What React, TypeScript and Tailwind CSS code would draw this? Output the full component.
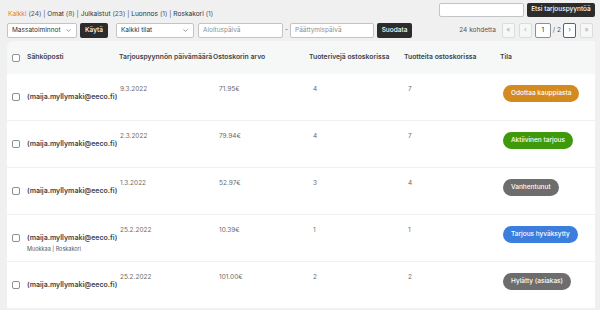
import { ChevronDown } from 'lucide-react';

type Row = {
  date: string;
  total: string;
  lines: string;
  qty: string;
  status: string;
  pill: string;
  actions?: boolean;
};

const rows: Row[] = [
  { date: '9.3.2022', total: '71.95€', lines: '4', qty: '7', status: 'Odottaa kauppiasta', pill: 'bg-[#d38a1f]' },
  { date: '2.3.2022', total: '79.94€', lines: '4', qty: '7', status: 'Aktiivinen tarjous', pill: 'bg-[#3f9a0b]' },
  { date: '1.3.2022', total: '52.97€', lines: '3', qty: '4', status: 'Vanhentunut', pill: 'bg-[#6d6d6d]' },
  { date: '25.2.2022', total: '10.39€', lines: '1', qty: '1', status: 'Tarjous hyväksytty', pill: 'bg-[#3b7ede]', actions: true },
  { date: '25.2.2022', total: '101.00€', lines: '2', qty: '2', status: 'Hylätty (asiakas)', pill: 'bg-[#6d6d6d]' },
];

const cols = 'grid grid-cols-[112px_94px_96px_95px_96px_1fr]';

function Checkbox() {
  return <span className="block w-[8px] h-[8px] rounded-[2px] border border-[#8c8f94] bg-white shrink-0" />;
}

function Select({ label, w }: { label: string; w: string }) {
  return (
    <div className={`${w} h-[15px] flex items-center justify-between pl-[4px] pr-[4px] bg-white border border-[#c3c4c7] rounded-[2px] text-[6.5px] text-[#2c3338]`}>
      <span>{label}</span>
      <ChevronDown className="w-[7px] h-[7px] text-[#50575e]" strokeWidth={2} />
    </div>
  );
}

function PageBtn({ ch, active }: { ch: string; active?: boolean }) {
  return (
    <span
      className={
        'w-[13px] h-[15px] flex items-center justify-center rounded-[2px] border text-[7px] ' +
        (active ? 'border-[#2271b1] bg-white text-[#2271b1]' : 'border-[#dcdcde] bg-[#f6f7f7] text-[#a7aaad]')
      }
    >
      {ch}
    </span>
  );
}

export default function App() {
  return (
    <div className="w-[600px] h-[310px] overflow-hidden bg-[#f0f0f1] font-['Inter','Liberation_Sans',sans-serif] text-[#2c3338]">
      {/* top row */}
      <div className="flex items-start justify-between pl-[8px] pr-[5px] pt-[3px] h-[17px]">
        <div className="mt-[6px] leading-[10px] text-[6.6px] text-[#50575e]">
          <span className="text-[#e5812a]">Kaikki</span> (24) | <span className="text-[#2c3338]">Omat</span> (8) |{' '}
          <span className="text-[#2c3338]">Julkaistut</span> (23) | <span className="text-[#2c3338]">Luonnos</span> (1) |{' '}
          <span className="text-[#2c3338]">Roskakori</span> (1)
        </div>
        <div className="flex items-center gap-[3px]">
          <div className="w-[85px] h-[14px] bg-white border border-[#c3c4c7] rounded-[2px]" />
          <div className="w-[68px] h-[14px] bg-[#2c2c2c] rounded-[2px] text-white text-[6.5px] font-medium flex items-center justify-center">
            Etsi tarjouspyyntöä
          </div>
        </div>
      </div>

      {/* filters row */}
      <div className="flex items-center justify-between pl-[7px] pr-[7px] mt-[6px] h-[15px]">
        <div className="flex items-center">
          <Select label="Massatoiminnot" w="w-[70px]" />
          <div className="ml-[3px] w-[28px] h-[15px] bg-[#2c2c2c] rounded-[2px] text-white text-[6.5px] font-medium flex items-center justify-center">
            Käytä
          </div>
          <div className="ml-[8px]">
            <Select label="Kaikki tilat" w="w-[78px]" />
          </div>
          <div className="ml-[4px] w-[85px] h-[15px] bg-white border border-[#c3c4c7] rounded-[2px] pl-[4px] flex items-center text-[6.5px] text-[#8c8f94]">
            Aloituspäivä
          </div>
          <span className="mx-[2px] text-[6.5px] text-[#50575e]">-</span>
          <div className="w-[84px] h-[15px] bg-white border border-[#c3c4c7] rounded-[2px] pl-[4px] flex items-center text-[6.5px] text-[#8c8f94]">
            Päättymispäivä
          </div>
          <div className="ml-[3px] w-[35px] h-[15px] bg-[#2c2c2c] rounded-[2px] text-white text-[6.5px] font-medium flex items-center justify-center">
            Suodata
          </div>
        </div>
        <div className="flex items-center text-[6.5px] text-[#50575e]">
          <span className="mr-[6px]">24 kohdetta</span>
          <PageBtn ch="«" />
          <span className="w-[4px]" />
          <PageBtn ch="‹" />
          <span className="w-[3px]" />
          <span className="w-[16px] h-[15px] bg-white border border-[#8c8f94] rounded-[2px] flex items-center justify-center text-[6.5px] text-[#2c3338]">
            1
          </span>
          <span className="mx-[2px]">/ 2</span>
          <PageBtn ch="›" active />
          <span className="w-[4px]" />
          <PageBtn ch="»" />
        </div>
      </div>

      {/* table */}
      <div className="ml-[7px] mr-[5px] mt-[3px] rounded-tl-[6px] overflow-hidden">
        <div className={`${cols} h-[33px] items-center bg-[#f6f7f7] text-[6.8px] font-semibold text-[#3c434a]`}>
          <div className="flex items-center pl-[5px] gap-[7px]">
            <Checkbox />
            <span>Sähköposti</span>
          </div>
          <div className="whitespace-nowrap">Tarjouspyynnön päivämäärä</div>
          <div>Ostoskorin arvo</div>
          <div>Tuoterivejä ostoskorissa</div>
          <div>Tuotteita ostoskorissa</div>
          <div>Tila</div>
        </div>
        {rows.map((r, i) => (
          <div key={i} className={`${cols} h-[47px] bg-white border-b border-[#f0f0f1] items-start text-[6.5px] text-[#6b6b6b]`}>
            <div className="pl-[5px] pt-[18px]">
              <div className="flex items-center gap-[7px] h-[10px]">
                <Checkbox />
                <span className="font-semibold text-[7px] text-[#3c434a]">(maija.myllymaki@eeco.fi)</span>
              </div>
              {r.actions && (
                <div className="pl-[15px] mt-[2px] text-[5.5px] text-[#50575e]">Muokkaa | Roskakori</div>
              )}
            </div>
            <div className="pl-[1px] pt-[10px] leading-[10px]">{r.date}</div>
            <div className="pl-[6px] pt-[10px] leading-[10px]">{r.total}</div>
            <div className="pl-[4px] pt-[10px] leading-[10px]">{r.lines}</div>
            <div className="pl-[4px] pt-[10px] leading-[10px]">{r.qty}</div>
            <div className="pl-[3px] pt-[11px]">
              <span className={`${r.pill} inline-flex items-center h-[17px] px-[8px] rounded-full text-white text-[6.5px] font-medium`}>
                {r.status}
              </span>
            </div>
          </div>
        ))}
      </div>
    </div>
  );
}
